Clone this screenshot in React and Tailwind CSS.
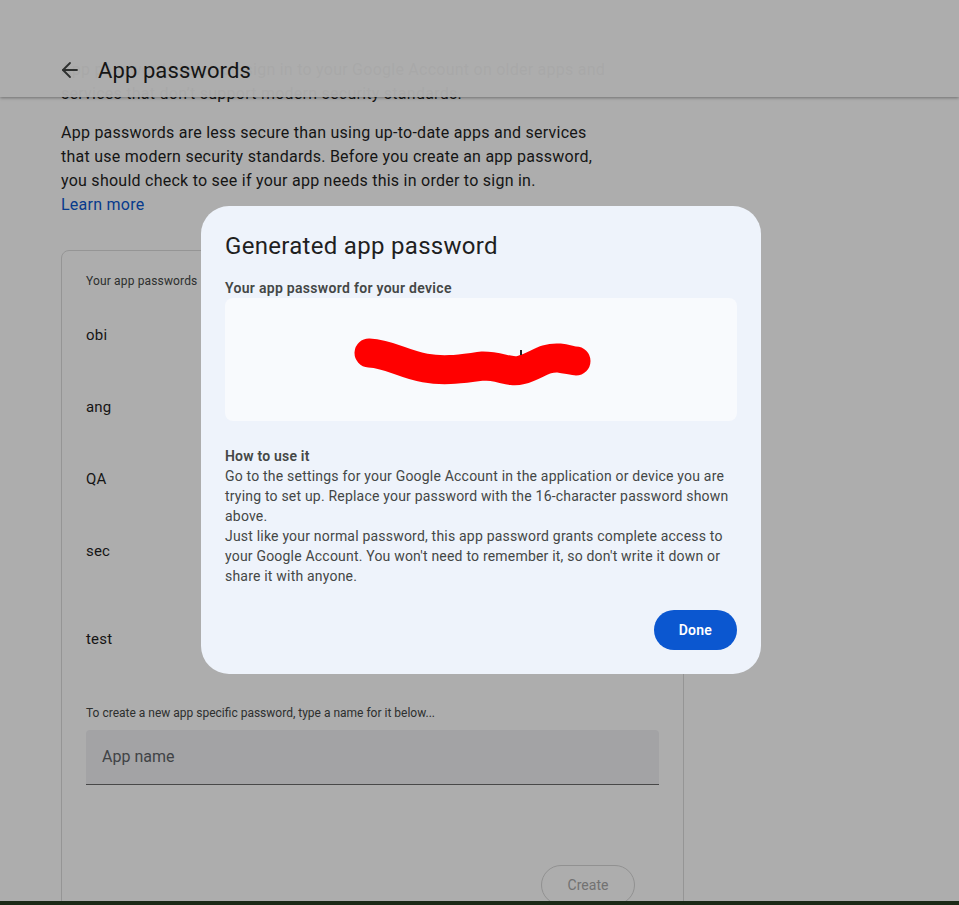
import { ArrowLeft } from 'lucide-react'

const appPasswords = [
  { name: 'obi', h: 'h-[72px]' },
  { name: 'ang', h: 'h-[72px]' },
  { name: 'QA', h: 'h-[72px]' },
  { name: 'sec', h: 'h-[72px]' },
  { name: 'test', h: 'h-[104px]' }
]

const sans = "font-['Roboto','Liberation_Sans',sans-serif]"

const Scribble = () => (
  <svg viewBox="0 0 512 123" className="absolute inset-0 w-full h-full">
    <path
      d="M144 55 C165 56 178 66 200 70 C222 74 240 70 258 68 C276 68 284 75 296 72 C312 68 318 59 334 60 C342 61 348 63 351 63"
      fill="none"
      stroke="#ff0000"
      strokeWidth="29"
      strokeLinecap="round"
      strokeLinejoin="round"
    />
    <path d="M296 52 L296 57" stroke="#222" strokeWidth="2" />
  </svg>
)

const App = () => {
  return (
    <div className={`h-[905px] w-full flex flex-col bg-white overflow-hidden ${sans}`}>
      <div className="relative flex-1 overflow-hidden">
        {/* Header */}
        <div className="absolute top-0 left-0 right-0 h-[97px] z-10 bg-white/[0.97] shadow-[0_1px_3px_rgba(0,0,0,0.35)] pt-[50px] pl-[58px]">
          <div className="flex items-center h-10 gap-[16px]">
            <ArrowLeft className="w-6 h-6 text-[#444746]" strokeWidth={1.8} />
            <h1 className="text-[22px] text-[#1f1f1f] tracking-[0.1px]">App passwords</h1>
          </div>
        </div>

        {/* Page content */}
        <div className="pl-[61px] pt-[58px] w-[684px] text-[#1f1f1f]">
          <p className="text-[16px] leading-6 mb-[15px] tracking-[0.25px]">
            <span className="block whitespace-nowrap">App passwords help you sign in to your Google Account on older apps and</span>
            <span className="block whitespace-nowrap">services that don’t support modern security standards.</span>
          </p>
          <p className="text-[16px] leading-6 tracking-[0.25px]">
            <span className="block whitespace-nowrap">App passwords are less secure than using up-to-date apps and services</span>
            <span className="block whitespace-nowrap">that use modern security standards. Before you create an app password,</span>
            <span className="block whitespace-nowrap">you should check to see if your app needs this in order to sign in.</span>
            <span className="block text-[#0b57d0]">Learn more</span>
          </p>

          <div className="mt-[33px] border border-[#dcdcdc] rounded-lg w-[623px] h-[700px] px-6 pt-[22px]">
            <div className="text-[12px] leading-4 text-[#444746] tracking-[0.15px]">Your app passwords</div>
            <div className="mt-[10px]">
              {appPasswords.map((item) => (
                <div key={item.name} className={`${item.h} flex items-center text-[15px] tracking-[0.2px]`}>
                  {item.name}
                </div>
              ))}
            </div>
            <div className="text-[12px] leading-4 text-[#444746] mt-[14px]">
              To create a new app specific password, type a name for it below...
            </div>
            <div className="mt-[9px] h-[55px] bg-[#f0f1f4] rounded-t border-b border-[#6b6b6b] flex items-center px-4 text-[16px] text-[#5f6368]">
              App name
            </div>
            <div className="flex justify-end mt-[80px] pr-6">
              <button className="h-10 w-[94px] rounded-full border border-[#d6d6d6] text-[14px] text-[#a8a8a8]">
                Create
              </button>
            </div>
          </div>
        </div>

        {/* Scrim */}
        <div className="absolute inset-0 z-20 bg-black/[0.32]" />

        {/* Dialog */}
        <div className="absolute z-30 left-[201px] top-[206px] w-[560px] rounded-[28px] bg-[#eef3fb] p-6">
          <h2 className="text-[24px] leading-8 text-[#1f1f1f] tracking-[0.3px]">Generated app password</h2>
          <div className="mt-4 text-[14px] leading-5 font-semibold text-[#444746] tracking-[0.3px]">
            Your app password for your device
          </div>
          <div className="relative h-[123px] rounded-lg bg-[#f8fafd]">
            <Scribble />
          </div>
          <div className="mt-[25px] text-[14px] leading-5 text-[#444746] tracking-[0.2px]">
            <div className="font-semibold">How to use it</div>
            <div className="whitespace-nowrap">Go to the settings for your Google Account in the application or device you are</div>
            <div className="whitespace-nowrap">trying to set up. Replace your password with the 16-character password shown</div>
            <div>above.</div>
            <div className="whitespace-nowrap">Just like your normal password, this app password grants complete access to</div>
            <div className="whitespace-nowrap">your Google Account. You won't need to remember it, so don't write it down or</div>
            <div>share it with anyone.</div>
          </div>
          <div className="flex justify-end mt-6">
            <button className="h-10 px-[25px] rounded-full bg-[#0b57d0] text-white text-[14px] font-semibold tracking-[0.2px]">
              Done
            </button>
          </div>
        </div>
      </div>
      <div className="h-1 bg-[#1b2a17]" />
    </div>
  )
}

export default App
